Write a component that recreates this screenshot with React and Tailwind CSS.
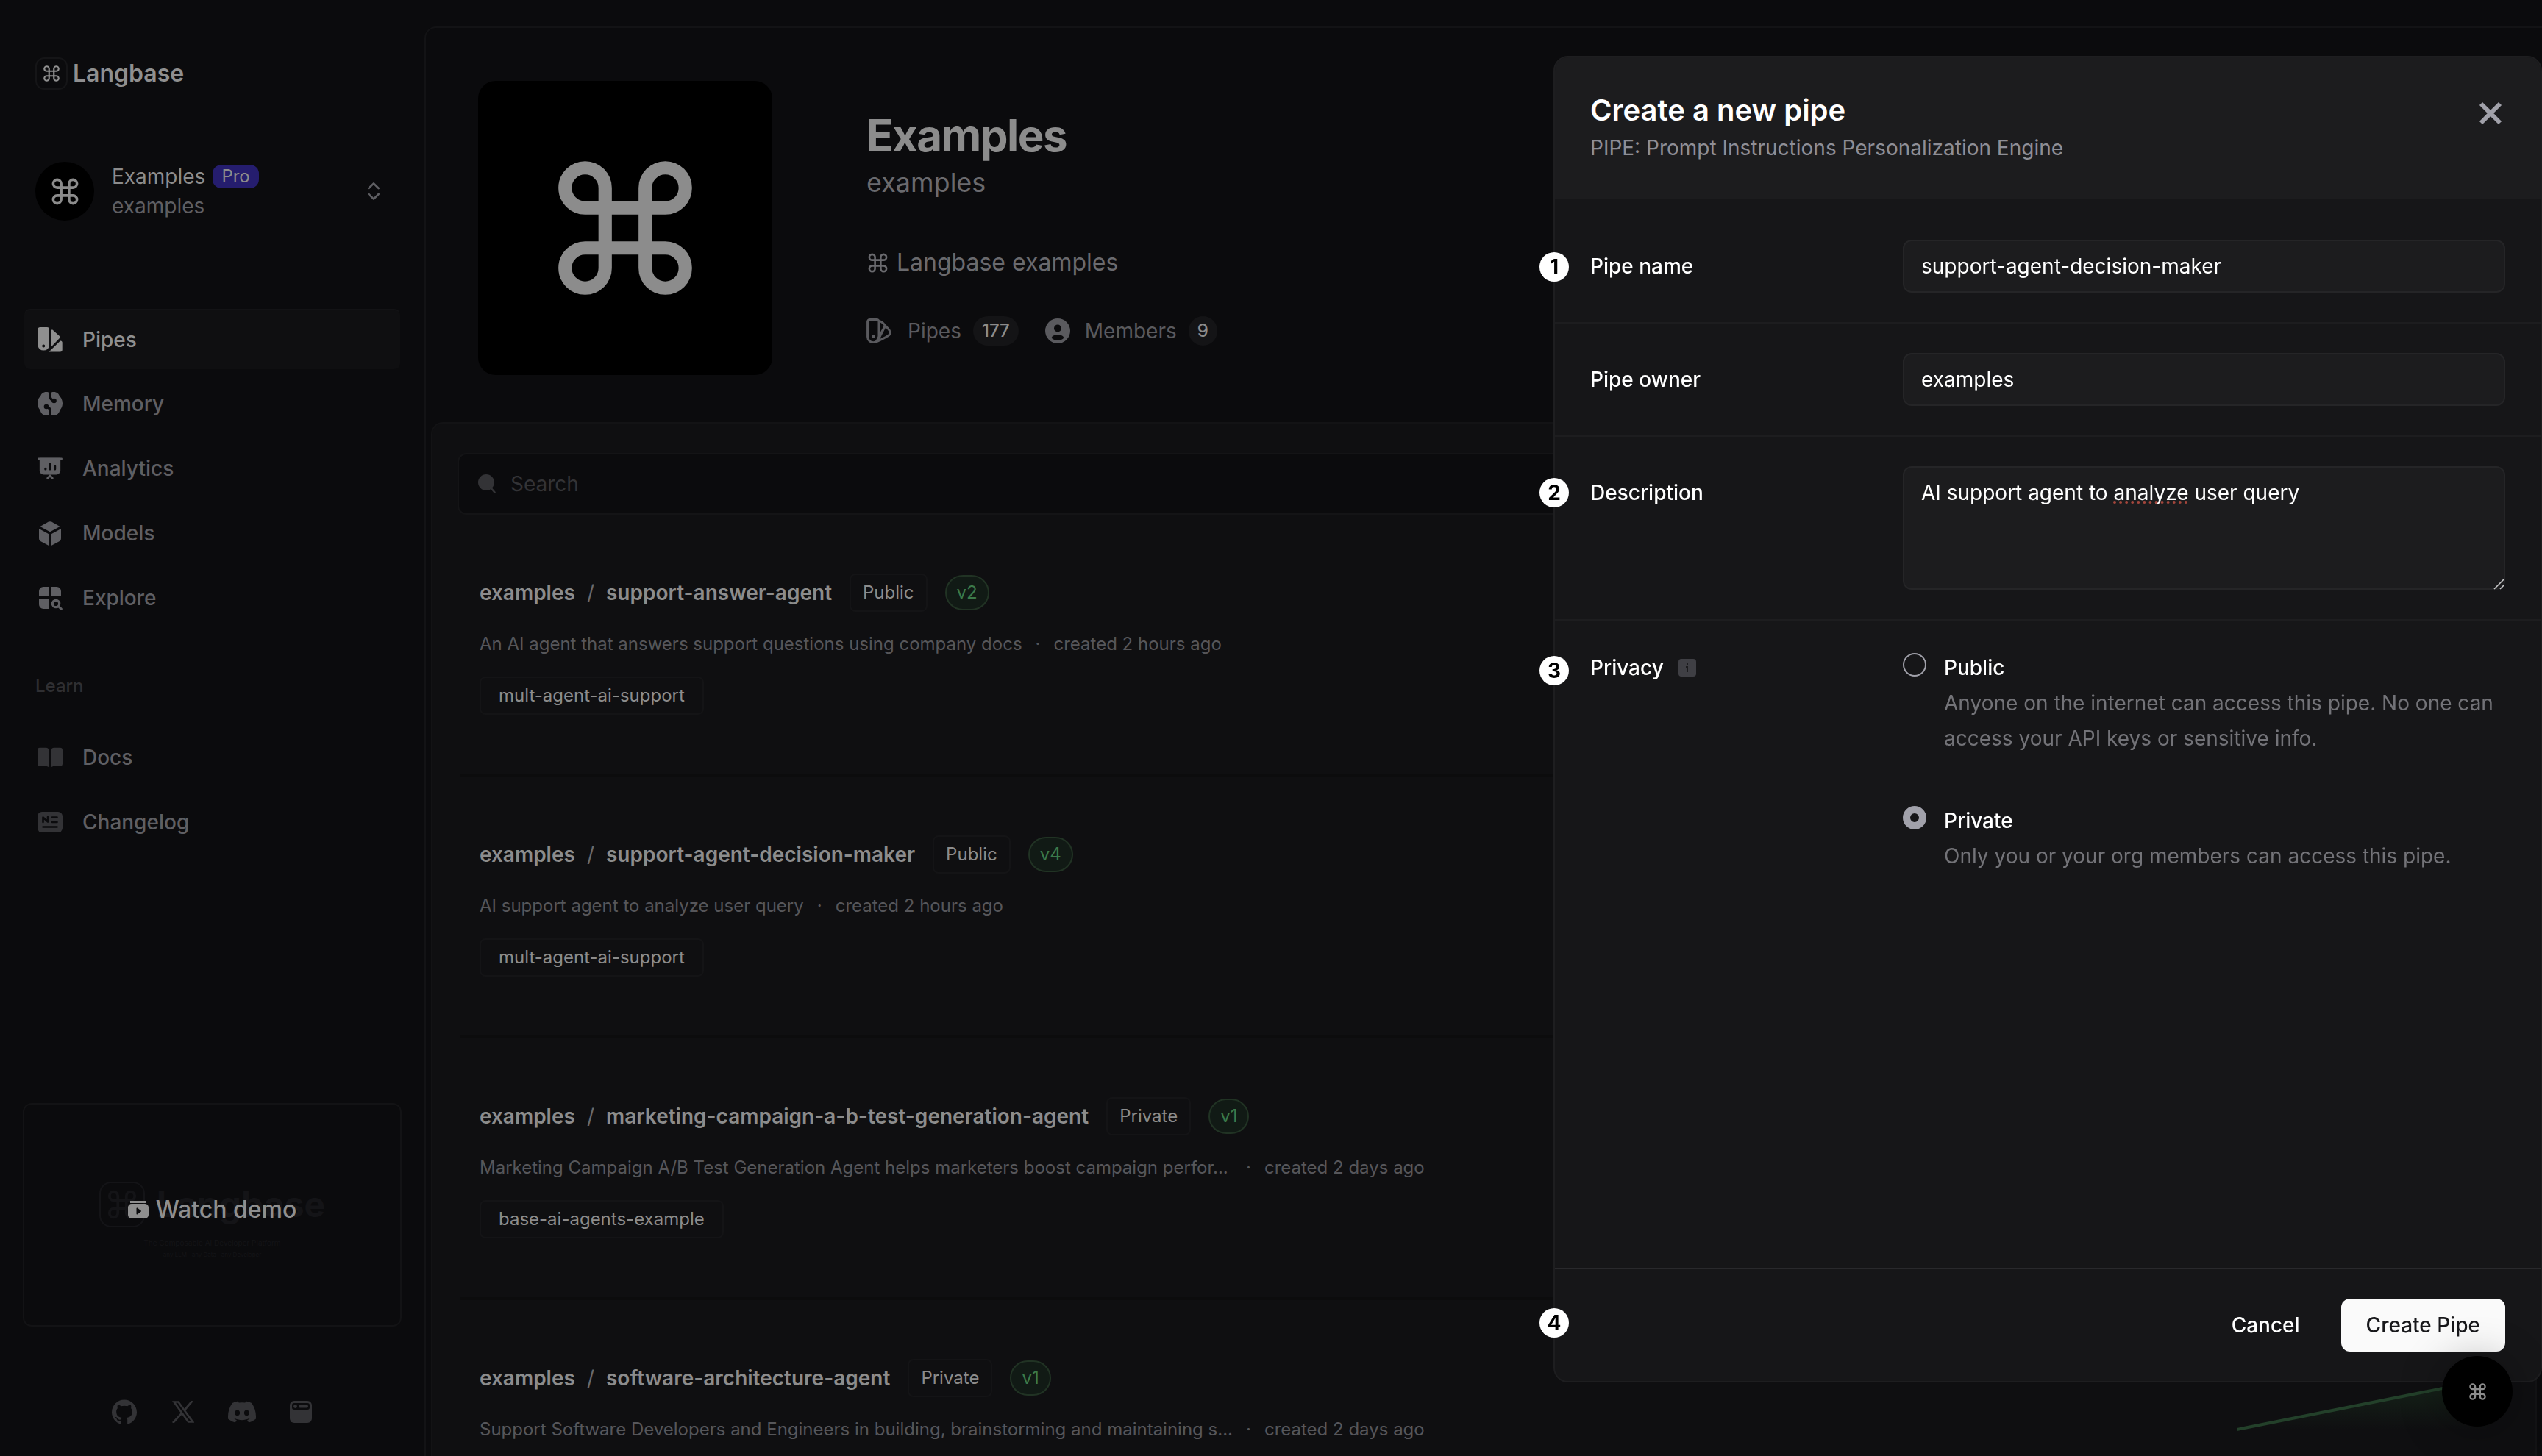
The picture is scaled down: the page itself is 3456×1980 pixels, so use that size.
import React from "react";
import { ChevronsUpDown, Command, X } from "lucide-react";

function SwatchIcon({ className }) {
  return (
    <svg viewBox="0 0 34 34" className={className} fill="currentColor" aria-hidden="true">
      <path fillRule="evenodd" d="M3.500 0h9.500a3 3 0 0 1 3 3v22.500a8 8 0 0 1-15.500 0V3a3 3 0 0 1 3-3Zm4.700 23.500a2 2 0 1 0 0 4 2 2 0 0 0 0-4Z" />
      <path d="M18.300 5.200c0-1.400 1.600-2.100 2.700-1.200l8.600 7.800c1 1 1 2.500 0 3.400L18.300 27Z" />
      <path d="M31.500 18.500c1.300 0 2.200 1.100 2.200 2.500v9.500a3 3 0 0 1-3 3H15.500L31 18.600Z" />
    </svg>
  );
}

function SwatchOutlineIcon({ className }) {
  return (
    <svg viewBox="0 0 34 34" className={className} fill="none" stroke="currentColor" strokeWidth="3" strokeLinejoin="round" aria-hidden="true">
      <path d="M4.500 1.500h9.500a3 3 0 0 1 3 3v20.500a7.700 7.700 0 0 1-15.400 0v-20.500a3 3 0 0 1 3-3Z" />
      <path d="M17 3.500c4 .5 6.500 3.500 8.500 6.500L16.500 28" />
      <path d="M25.500 10c2 2 6.800 6 6.800 9.500 0 4-6 6-19 12.500l12.200-22" />
      <circle cx="9.300" cy="24.800" r="2.300" fill="currentColor" stroke="none" />
    </svg>
  );
}

function BrainIcon({ className }) {
  return (
    <svg viewBox="0 0 34 34" className={className} fill="none" aria-hidden="true">
      <path fill="currentColor" d="M12 1c2 0 4 .5 5 1.500C18 1.500 20 1 22 1c4.500 0 7 2.500 8 6 2.300 1.500 4 5.500 4 9.500 0 4-1.500 7-3.500 9C29.500 30 26.500 33 22 33c-2 0-4-.2-5-1.200-1 1-3 1.200-5 1.200-4.500 0-7.500-3-8.500-7.500-2-2-3.500-5-3.500-9C0 12.500 1.700 8.500 4 7c1-3.500 3.500-6 8-6Z" />
      <path stroke="#0b0b0d" strokeWidth="3.400" d="M17.200 0v7c0 3.500 2 5 5 5.500M17.200 34v-7c0-3.500-2-5-5-5.500" />
      <circle cx="22.500" cy="13" r="3.300" fill="#0b0b0d" />
      <circle cx="12" cy="21" r="3.300" fill="#0b0b0d" />
    </svg>
  );
}

function BoardIcon({ className }) {
  return (
    <svg viewBox="0 0 36 34" className={className} fill="none" aria-hidden="true">
      <path fill="currentColor" d="M3 2h30v18a6 6 0 0 1-6 6H9a6 6 0 0 1-6-6Z" />
      <path stroke="currentColor" strokeWidth="3" strokeLinecap="round" d="M1.500 3.200h33M14.500 31l3.500-3.500 3.500 3.500" />
      <path stroke="#0b0b0d" strokeWidth="3.400" strokeLinecap="round" d="M11.500 17.500v.5M18 10.500v7.500M25 13.500v4.500" />
    </svg>
  );
}

function CubeIcon({ className }) {
  return (
    <svg viewBox="0 0 34 34" className={className} fill="currentColor" aria-hidden="true">
      <path d="M15 1.600a5 5 0 0 1 4 0L30.500 8 17 15.200 3.500 8Z" />
      <path d="M2 11l13.300 7.200V34L5 28.500a5 5 0 0 1-3-4.600ZM32 11l-13.300 7.200V34L29 28.500a5 5 0 0 0 3-4.600Z" />
    </svg>
  );
}

function ExploreIcon({ className }) {
  return (
    <svg viewBox="0 0 34 34" className={className} fill="currentColor" aria-hidden="true">
      <path d="M8 2h7.500v13H2V8a6 6 0 0 1 6-6ZM19 2h7a6 6 0 0 1 6 6v7H19ZM2 18.500h13.500V32H8a6 6 0 0 1-6-6Z" />
      <g fill="none" stroke="currentColor" strokeWidth="3.200" strokeLinecap="round">
        <circle cx="25" cy="25" r="4.700" />
        <path d="M28.600 28.600l3.600 3.600" />
      </g>
    </svg>
  );
}

function BookIcon({ className }) {
  return (
    <svg viewBox="0 0 36 30" className={className} fill="currentColor" aria-hidden="true">
      <path d="M3.500 1H12a4.300 4.300 0 0 1 4.300 4.300V29c-2-1.200-4-1.500-6.500-1.500H3.500A3.500 3.500 0 0 1 0 24V4.500A3.500 3.500 0 0 1 3.500 1ZM32.500 1H24a4.300 4.300 0 0 0-4.300 4.300V29c2-1.200 4-1.500 6.500-1.500h6.300A3.500 3.500 0 0 0 36 24V4.500A3.500 3.500 0 0 0 32.500 1Z" />
    </svg>
  );
}

function NewsIcon({ className }) {
  return (
    <svg viewBox="0 0 34 28" className={className} fill="none" aria-hidden="true">
      <rect width="34" height="28" rx="6" fill="currentColor" />
      <path stroke="#0b0b0d" strokeWidth="2.600" strokeLinecap="round" strokeLinejoin="round" d="M7.500 14V7.500l6.500 6V7M20 7.500h6.500M20 14h6.500M7.500 20.500h19" />
    </svg>
  );
}

function MemberIcon({ className }) {
  return (
    <svg viewBox="0 0 34 34" className={className} aria-hidden="true">
      <circle cx="17" cy="17" r="17" fill="currentColor" />
      <circle cx="17" cy="13.500" r="5" fill="#0b0b0d" />
      <path fill="#0b0b0d" d="M8.500 26.500c1-3 4.500-4.500 8.500-4.500s7.500 1.500 8.500 4.500c-2 2.300-5 3.500-8.500 3.500s-6.500-1.200-8.500-3.500Z" />
    </svg>
  );
}

function SearchIcon({ className }) {
  return (
    <svg viewBox="0 0 24 26" className={className} aria-hidden="true">
      <circle cx="11" cy="11" r="11" fill="currentColor" />
      <path stroke="currentColor" strokeWidth="2.600" strokeLinecap="round" d="M17 18l5.500 6.500" />
    </svg>
  );
}

function DemoIcon({ className }) {
  return (
    <svg viewBox="0 0 28 26" className={className} aria-hidden="true">
      <path fill="currentColor" d="M3 1h21v3H3z" />
      <path fillRule="evenodd" fill="currentColor" d="M5 5h18a5 5 0 0 1 5 5v10a5 5 0 0 1-5 5H5a5 5 0 0 1-5-5V10a5 5 0 0 1 5-5Zm6.500 6.500v7c0 .8.800 1.200 1.500.8l4.500-3.500c.6-.4.600-1.200 0-1.600L13 10.700c-.7-.4-1.500 0-1.500.8Z" />
    </svg>
  );
}

function GithubIcon({ className }) {
  return (
    <svg viewBox="0 0 24 24" className={className} fill="currentColor" aria-hidden="true">
      <path d="M12 .297c-6.630 0-12 5.373-12 12 0 5.303 3.438 9.800 8.205 11.385.6.113.820-.258.820-.577 0-.285-.010-1.040-.015-2.040-3.338.724-4.042-1.610-4.042-1.610C4.422 18.070 3.633 17.700 3.633 17.700c-1.087-.744.084-.729.084-.729 1.205.084 1.838 1.236 1.838 1.236 1.070 1.835 2.809 1.305 3.495.998.108-.776.417-1.305.760-1.605-2.665-.3-5.466-1.332-5.466-5.930 0-1.310.465-2.380 1.235-3.220-.135-.303-.540-1.523.105-3.176 0 0 1.005-.322 3.300 1.230.960-.267 1.980-.399 3-.405 1.020.006 2.040.138 3 .405 2.280-1.552 3.285-1.230 3.285-1.230.645 1.653.240 2.873.120 3.176.765.840 1.230 1.910 1.230 3.220 0 4.610-2.805 5.625-5.475 5.920.420.360.810 1.096.810 2.220 0 1.606-.015 2.896-.015 3.286 0 .315.210.690.825.570C20.565 22.092 24 17.592 24 12.297c0-6.627-5.373-12-12-12" />
    </svg>
  );
}

function XLogoIcon({ className }) {
  return (
    <svg viewBox="0 0 30 30" className={className} fill="none" stroke="currentColor" aria-hidden="true">
      <path strokeWidth="2.600" d="M2.500 1.500h6L28 28.500h-6Z" />
      <path strokeWidth="2.800" d="M27.500 0L17 12.500M13 17L1 30" />
    </svg>
  );
}

function DiscordIcon({ className }) {
  return (
    <svg viewBox="0 0 24 24" className={className} fill="currentColor" aria-hidden="true">
      <path d="M20.317 4.370a19.791 19.791 0 0 0-4.885-1.515.074.074 0 0 0-.079.037c-.210.375-.444.864-.608 1.250a18.270 18.270 0 0 0-5.487 0 12.640 12.640 0 0 0-.617-1.250.077.077 0 0 0-.079-.037A19.736 19.736 0 0 0 3.677 4.370a.070.070 0 0 0-.032.027C.533 9.046-.320 13.580.099 18.057a.082.082 0 0 0 .031.057 19.900 19.900 0 0 0 5.993 3.030.078.078 0 0 0 .084-.028c.462-.630.874-1.295 1.226-1.994a.076.076 0 0 0-.041-.106 13.107 13.107 0 0 1-1.872-.892.077.077 0 0 1-.008-.128c.126-.094.252-.192.372-.291a.074.074 0 0 1 .077-.010c3.928 1.793 8.180 1.793 12.062 0a.074.074 0 0 1 .078.009c.120.099.246.198.373.292a.077.077 0 0 1-.006.127 12.299 12.299 0 0 1-1.873.892.077.077 0 0 0-.041.107c.360.698.772 1.362 1.225 1.993a.076.076 0 0 0 .084.028 19.839 19.839 0 0 0 6.002-3.030.077.077 0 0 0 .032-.054c.500-5.177-.838-9.674-3.549-13.660a.061.061 0 0 0-.031-.030zM8.020 15.330c-1.183 0-2.157-1.085-2.157-2.419 0-1.333.956-2.419 2.157-2.419 1.210 0 2.176 1.096 2.157 2.420 0 1.333-.956 2.418-2.157 2.418zm7.975 0c-1.183 0-2.157-1.085-2.157-2.419 0-1.333.955-2.419 2.157-2.419 1.210 0 2.176 1.096 2.157 2.420 0 1.333-.946 2.418-2.157 2.418z" />
    </svg>
  );
}

function BrowserIcon({ className }) {
  return (
    <svg viewBox="0 0 30 30" className={className} aria-hidden="true">
      <rect width="30" height="30" rx="6" fill="currentColor" />
      <rect x="3" y="3" width="24" height="9" rx="3" fill="#0b0b0d" />
      <circle cx="7.500" cy="7.500" r="2.400" fill="currentColor" />
      <rect x="12" y="5.600" width="13" height="3.800" rx="1.900" fill="currentColor" />
    </svg>
  );
}

const mainNav = [
  { label: "Pipes", Icon: SwatchIcon, active: true },
  { label: "Memory", Icon: BrainIcon },
  { label: "Analytics", Icon: BoardIcon },
  { label: "Models", Icon: CubeIcon },
  { label: "Explore", Icon: ExploreIcon },
];

const learnNav = [
  { label: "Docs", Icon: BookIcon },
  { label: "Changelog", Icon: NewsIcon },
];

const socials = [
  { label: "GitHub", Icon: GithubIcon, size: "size-[34px]" },
  { label: "X", Icon: XLogoIcon, size: "size-[30px]" },
  { label: "Discord", Icon: DiscordIcon, size: "size-[38px]" },
  { label: "Changelog feed", Icon: BrowserIcon, size: "size-[30px]" },
];

const pipes = [
  { name: "support-answer-agent", privacy: "Public", version: "v2", text: "An AI agent that answers support questions using company docs", created: "created 2 hours ago", tag: "mult-agent-ai-support" },
  { name: "support-agent-decision-maker", privacy: "Public", version: "v4", text: "AI support agent to analyze user query", created: "created 2 hours ago", tag: "mult-agent-ai-support" },
  { name: "marketing-campaign-a-b-test-generation-agent", privacy: "Private", version: "v1", text: "Marketing Campaign A/B Test Generation Agent helps marketers boost campaign perfor...", created: "created 2 days ago", tag: "base-ai-agents-example", long: true },
  { name: "software-architecture-agent", privacy: "Private", version: "v1", text: "Support Software Developers and Engineers in building, brainstorming and maintaining s...", created: "created 2 days ago", long: true },
];

function NavLink({ label, Icon, active, dim }) {
  return (
    <a
      href="#"
      className={
        active
          ? "flex h-[82px] items-center gap-[26px] rounded-lg border-t-2 border-[#131315] bg-[#0f0f11] px-[17px] text-[28px] font-medium text-[#8f8f8f]"
          : "flex h-[82px] items-center gap-[26px] rounded-lg px-[17px] text-[28px] font-medium text-[#5f5f63]"
      }
    >
      <span className={dim ? "flex w-9 justify-center text-[#333336]" : "flex w-9 justify-center"}>
        <Icon className="h-[34px] w-[34px]" />
      </span>
      {label}
    </a>
  );
}

function Sidebar() {
  return (
    <aside className="flex h-full w-[577px] shrink-0 flex-col px-[31px] pt-[78px]">
      <a href="#" className="flex items-center gap-[7px] pl-[17px] text-[32px] leading-[44px] font-semibold text-[#8f8f8f]">
        <span className="flex size-11 items-center justify-center rounded-xl border-2 border-[#151517]">
          <Command className="size-[26px]" strokeWidth={2} />
        </span>
        Langbase
      </a>

      <button type="button" className="mt-[98px] flex items-center pr-[22px] pl-[17px] text-left text-[28px] leading-10">
        <span className="flex size-20 shrink-0 items-center justify-center rounded-full bg-black text-[#8c8c8c]">
          <Command className="size-[43px]" strokeWidth={2} />
        </span>
        <span className="ml-6 flex grow flex-col">
          <span className="flex items-center gap-2.5 text-[#8c8c8c]">
            Examples
            <span className="rounded-xl bg-[#251d6e] px-3 text-2xl leading-8">Pro</span>
          </span>
          <span className="text-[#5f5f63]">examples</span>
        </span>
        <ChevronsUpDown className="size-8 text-[#5f5f63]" strokeWidth={2} />
      </button>

      <nav className="mx-0.5 mt-[120px] flex flex-col gap-1.5" aria-label="Main">
        {mainNav.map((item) => (
          <NavLink key={item.label} {...item} />
        ))}
      </nav>

      <h2 className="mt-[62px] mb-[39px] pl-[17px] text-2xl leading-[34px] font-medium text-[#2f2f32]">Learn</h2>
      <nav className="mx-0.5 flex flex-col gap-1.5" aria-label="Learn">
        {learnNav.map((item) => (
          <NavLink key={item.label} {...item} dim />
        ))}
      </nav>

      <button
        type="button"
        className="relative mt-auto mb-[96px] flex h-[304px] shrink-0 flex-col items-center justify-center rounded-xl border-2 border-[#131315] text-[#141417]"
      >
        <span className="flex items-center gap-4 pt-4 text-5xl leading-[64px] font-bold">
          <span className="flex size-[62px] items-center justify-center rounded-2xl border-2 border-[#141417]">
            <Command className="size-[46px]" strokeWidth={2} />
          </span>
          Langbase
        </span>
        <span className="mt-3 text-[10px] leading-4">The Composable AI Developer Platform</span>
        <span className="text-[8px] leading-4">any LLM · any Data · any Developer</span>
        <span className="absolute inset-0 flex items-center justify-center gap-2.5 pb-3.5 text-[32px] font-medium text-[#8f8f8f]">
          <DemoIcon className="h-[26px] w-7" />
          Watch demo
        </span>
      </button>

      <div className="mb-10 flex justify-center gap-10 text-[#333336]">
        {socials.map(({ label, Icon, size }) => (
          <a key={label} href="#" aria-label={label} className="flex size-10 items-center justify-center">
            <Icon className={size} />
          </a>
        ))}
      </div>
    </aside>
  );
}

function OrgHeader() {
  return (
    <header className="flex gap-32 px-[71px] pt-[72px] pb-16">
      <div className="flex size-[400px] items-center justify-center rounded-3xl bg-black text-[#8c8c8c]">
        <Command className="size-[218px]" strokeWidth={2} />
      </div>
      <div className="flex flex-col pt-[34px] text-[#6a6a6e]">
        <h1 className="text-[60px] leading-[80px] font-bold tracking-tight text-[#8c8c8c]">Examples</h1>
        <p className="text-4xl leading-[48px]">examples</p>
        <p className="mt-[61px] flex items-center gap-2.5 text-[32px] leading-[48px]">
          <Command className="size-[31px]" strokeWidth={2} />
          Langbase examples
        </p>
        <div className="mt-[49px] flex items-center gap-9 text-[28px] leading-10 text-[#5a5a5e]">
          <div className="flex items-center">
            <SwatchOutlineIcon className="size-[34px]" />
            <span className="ml-[22px]">Pipes</span>
            <span className="ml-4 rounded-full bg-[#141416] px-3 text-2xl leading-10 font-medium text-[#8c8c8c]">177</span>
          </div>
          <div className="flex items-center">
            <MemberIcon className="size-[34px]" />
            <span className="ml-5">Members</span>
            <span className="ml-4 rounded-full bg-[#141416] px-3 text-2xl leading-10 font-medium text-[#8c8c8c]">9</span>
          </div>
        </div>
      </div>
    </header>
  );
}

function PipeRow({ pipe }) {
  return (
    <li className="flex flex-col items-start border-b-4 border-[#0c0c0d] px-[26px] py-20">
      <div className="flex h-[52px] items-center text-[28px] font-semibold text-[#8c8c8c]">
        <a href="#">examples</a>
        <span className="mx-4 font-normal text-[#6a6a6e]">/</span>
        <a href="#">{pipe.name}</a>
        <span className="ml-6 rounded-lg border-2 border-[#141416] px-4 text-2xl leading-[48px] font-normal">{pipe.privacy}</span>
        <span className="ml-6 rounded-full border-2 border-[#213324] bg-[#111a15] px-3.5 text-2xl leading-[44px] font-normal text-[#3c7a4a]">{pipe.version}</span>
      </div>
      <p className="my-5 flex gap-[18px] text-2xl leading-[48px] text-[#56565a]">
        <span className={pipe.long ? "min-w-[1024px]" : ""}>{pipe.text}</span>
        <span>·</span>
        <span>{pipe.created}</span>
      </p>
      {pipe.tag && (
        <span className="rounded-lg border-2 border-[#141416] px-6 text-2xl leading-[48px] text-[#8c8c8c]">{pipe.tag}</span>
      )}
    </li>
  );
}

function Marker({ children, className }) {
  return (
    <span className={`absolute -left-[21px] flex size-10 items-center justify-center rounded-full bg-white text-[28px] font-bold text-black ${className}`}>
      {children}
    </span>
  );
}

const field = "block w-full rounded-xl border-2 border-[#252527] bg-[#1c1c1e] px-[23px] text-[28px] text-white outline-none";

function PrivacyOption({ id, label, text, checked }) {
  return (
    <div className="flex gap-6">
      <input
        id={id}
        type="radio"
        name="privacy"
        defaultChecked={checked}
        aria-describedby={`${id}-text`}
        className="mt-1 size-8 shrink-0 appearance-none rounded-full border-2 border-[#a1a1aa] checked:border-[10px]"
      />
      <div className="text-[28px] leading-[48px]">
        <label htmlFor={id} className="block font-medium text-white">{label}</label>
        <p id={`${id}-text`} className="text-[#737378]">{text}</p>
      </div>
    </div>
  );
}

function CreatePipeDialog() {
  const row = "relative grid grid-cols-[425px_1fr] border-b-2 border-[#1d1d1f] px-12 py-10";
  return (
    <form
      role="dialog"
      aria-labelledby="dialog-title"
      onSubmit={(e) => e.preventDefault()}
      className="fixed top-[76px] right-0 bottom-[100px] flex w-[1344px] flex-col rounded-[20px] border-2 border-[#1e1e20] bg-[#161618]"
    >
      <header className="flex items-start justify-between rounded-t-[18px] bg-[#1c1c1e] px-12 pt-11 pb-[46px]">
        <div>
          <h2 id="dialog-title" className="text-[40px] leading-[56px] font-semibold text-white">Create a new pipe</h2>
          <p className="text-[28px] leading-[46px] text-[#8e8e96]">PIPE: Prompt Instructions Personalization Engine</p>
        </div>
        <button type="button" aria-label="Close" className="mt-1.5 -mr-1.5 text-[#a1a1aa]">
          <X className="size-[52px]" strokeWidth={2.7} strokeLinecap="butt" />
        </button>
      </header>

      <div className={`${row} items-center pt-14`}>
        <Marker className="top-[73px]">1</Marker>
        <label htmlFor="pipe-name" className="text-[28px] font-medium text-white">Pipe name</label>
        <input id="pipe-name" type="text" defaultValue="support-agent-decision-maker" className={`${field} h-[72px]`} />
      </div>
      <div className={`${row} items-center`}>
        <label htmlFor="pipe-owner" className="text-[28px] font-medium text-white">Pipe owner</label>
        <input id="pipe-owner" type="text" defaultValue="examples" className={`${field} h-[72px]`} />
      </div>
      <div className={row}>
        <Marker className="top-[56px]">2</Marker>
        <label htmlFor="pipe-description" className="pt-4 text-[28px] leading-10 font-medium text-white">Description</label>
        <div className="relative">
          <textarea
            id="pipe-description"
            spellCheck={false}
            defaultValue="AI support agent to analyze user query"
            className={`${field} h-[168px] resize-none py-3.5 leading-10`}
          />
          <span aria-hidden="true" className="absolute top-[47px] left-[286px] w-[101px] border-b-4 border-dotted border-[#a3463c]" />
          <svg viewBox="0 0 16 16" className="absolute right-0 bottom-0 size-4" aria-hidden="true">
            <path d="M1 15L15 1M9 15L15 9" stroke="#c8c8ca" strokeWidth="1.600" />
          </svg>
        </div>
      </div>
      <div className="relative grid grow grid-cols-[425px_1fr] content-start px-12 pt-10">
        <Marker className="top-[48px]">3</Marker>
        <span className="flex h-12 items-center gap-5 text-[28px] font-medium text-white">
          Privacy
          <svg viewBox="0 0 24 24" className="size-6" aria-hidden="true">
            <rect width="24" height="24" rx="4" fill="#3f3f44" />
            <path d="M12 6v2M10 11h2v7" stroke="#1c1c1e" strokeWidth="2" fill="none" />
          </svg>
        </span>
        <div className="flex flex-col gap-16" role="radiogroup" aria-label="Privacy">
          <PrivacyOption id="public" label="Public" text="Anyone on the internet can access this pipe. No one can access your API keys or sensitive info." />
          <PrivacyOption id="private" label="Private" text="Only you or your org members can access this pipe." checked />
        </div>
      </div>

      <footer className="relative flex items-center justify-end gap-6 border-t-2 border-[#29292c] px-12 py-10 text-[28px] font-medium">
        <Marker className="top-[53px]">4</Marker>
        <button type="button" className="h-[72px] px-8 text-white">Cancel</button>
        <button type="submit" className="h-[72px] rounded-xl bg-[#fafafa] px-[34px] text-[#18181b]">Create Pipe</button>
      </footer>
    </form>
  );
}

export default function App() {
  return (
    <div className="flex h-screen overflow-hidden bg-[#0b0b0d] font-['Inter',sans-serif]">
      <Sidebar />
      <main className="mt-9 flex min-w-0 grow flex-col rounded-tl-2xl border-t-2 border-l-2 border-[#131315]">
        <OrgHeader />
        <section className="relative mx-[7px] min-h-0 grow overflow-hidden rounded-t-2xl border-2 border-b-0 border-[#131315] bg-[#0f0f11] px-[34px] pt-10">
          <label className="flex h-[84px] items-center gap-5 rounded-xl border-2 border-[#141416] bg-[#0b0b0d] px-[26px] text-[#333336]">
            <SearchIcon className="h-[26px] w-6" />
            <input type="search" aria-label="Search" placeholder="Search" className="grow bg-transparent text-[28px] outline-none placeholder:text-[#333336]" />
          </label>
          <ul className="mx-1">
            {pipes.map((pipe) => (
              <PipeRow key={pipe.name} pipe={pipe} />
            ))}
          </ul>
          <svg viewBox="0 0 340 110" className="absolute right-[66px] bottom-0 h-[110px] w-[340px]" aria-hidden="true">
            <defs>
              <linearGradient id="usage-fill" x1="0" y1="0" x2="0" y2="1">
                <stop offset="0" stopColor="#1d3a22" stopOpacity="0.500" />
                <stop offset="1" stopColor="#1d3a22" stopOpacity="0" />
              </linearGradient>
            </defs>
            <path d="M0 74L340 6V74Z" fill="url(#usage-fill)" />
            <path d="M0 74L340 6" stroke="#23402a" strokeWidth="4" />
          </svg>
        </section>
      </main>
      <CreatePipeDialog />
      <button
        type="button"
        aria-label="Open command menu"
        className="fixed right-10 bottom-10 flex size-24 items-center justify-center rounded-full bg-black text-[#8c8c8c] shadow-[0_4px_60px_rgba(0,0,0,0.300)]"
      >
        <Command className="size-[27px]" strokeWidth={2} />
      </button>
    </div>
  );
}
